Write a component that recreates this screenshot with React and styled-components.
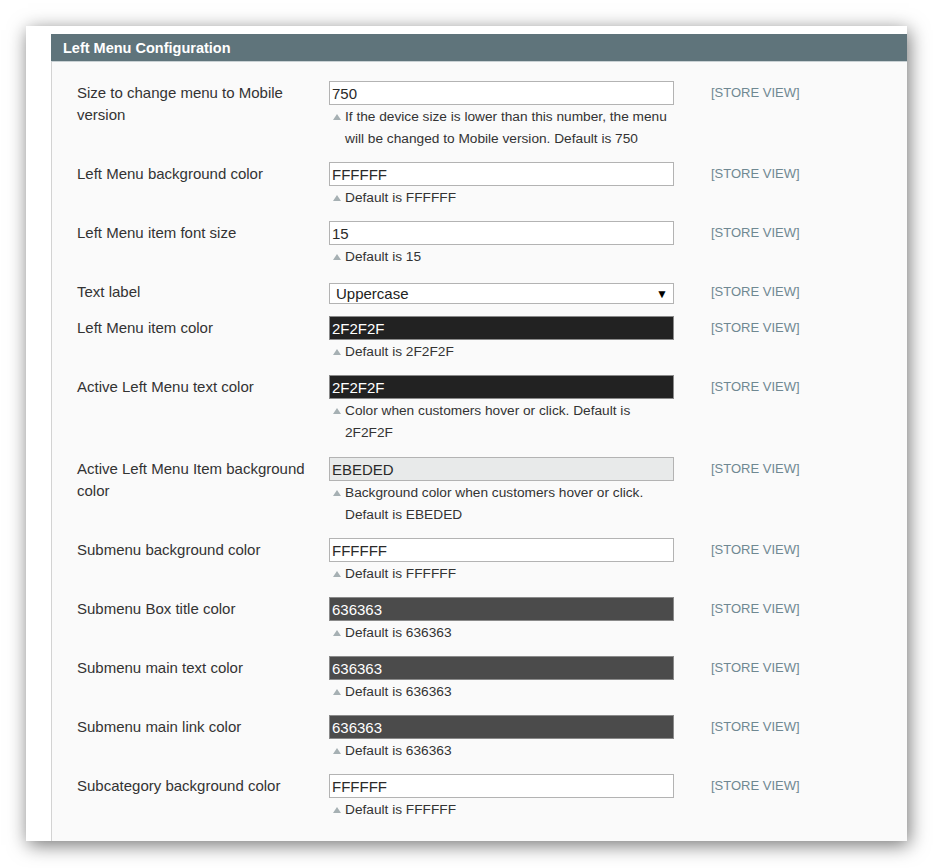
import React from "react";
import styled, { createGlobalStyle } from "styled-components";

const GlobalStyle = createGlobalStyle`
  html, body {
    margin: 0;
    padding: 0;
    background: #fff;
  }
  body {
    font-family: "Liberation Sans", Arial, sans-serif;
    color: #2f2f2f;
  }
`;

const Page = styled.div`
  padding: 26px 0 27px 26px;
`;

const Card = styled.div`
  width: 881px;
  height: 815px;
  box-sizing: border-box;
  padding: 8px 0 0 25px;
  background: #fff;
  box-shadow: 2px 4px 18px rgba(0, 0, 0, 0.55);
  display: flex;
  flex-direction: column;
`;

const Header = styled.div`
  height: 28px;
  box-sizing: border-box;
  background: #5f747b;
  border-bottom: 1px solid #c9d1d4;
  color: #fff;
  font-weight: bold;
  font-size: 14.5px;
  line-height: 29px;
  padding-left: 12px;
`;

const Body = styled.div`
  flex: 1;
  background: #fafafa;
  border-left: 1px solid #d3d3d3;
  padding: 19px 0 8px 25px;
`;

const Row = styled.div`
  display: grid;
  grid-template-columns: 252px 345px 1fr;
  padding-bottom: ${(p) => (p.$long ? 13 : 12)}px;
`;

const Label = styled.div`
  font-size: 15px;
  line-height: 22px;
  padding: 1px 12px 0 0;
  color: #333;
`;

const Field = styled.div`
  display: flex;
  flex-direction: column;
`;

const Input = styled.input`
  box-sizing: border-box;
  width: 345px;
  height: 24px;
  margin: 0;
  padding: 0 2px;
  border: 1px solid ${(p) => (p.$dark ? "#8a8a8a" : "#b3b3b3")};
  background: ${(p) => p.$bg || "#fff"};
  color: ${(p) => (p.$dark ? "#fff" : "#2a2a2a")};
  font-family: "Liberation Sans", Arial, sans-serif;
  font-size: 15px;
  outline: none;
`;

const SelectBox = styled.div`
  height: 24px;
  padding-top: 3px;
  box-sizing: border-box;
`;

const Select = styled.div`
  box-sizing: border-box;
  height: 21px;
  border: 1px solid #b3b3b3;
  background: #fff;
  display: flex;
  align-items: center;
  justify-content: space-between;
  padding: 0 5px 0 6px;
  font-size: 15px;
  color: #222;
`;

const Arrow = styled.span`
  font-size: 12px;
  color: #000;
`;

const Note = styled.div`
  position: relative;
  margin-top: 1px;
  padding-left: 16px;
  font-size: 13.7px;
  line-height: 22px;
  color: #333;

  &::before {
    content: "";
    position: absolute;
    left: 4px;
    top: 8px;
    border-left: 4px solid transparent;
    border-right: 4px solid transparent;
    border-bottom: 6px solid #a6b0b3;
  }
`;

const Scope = styled.div`
  padding-left: 37px;
  font-size: 13px;
  line-height: 24px;
  color: #6f8892;
`;

const rows = [
  {
    label: "Size to change menu to Mobile version",
    value: "750",
    note: "If the device size is lower than this number, the menu will be changed to Mobile version. Default is 750",
  },
  { label: "Left Menu background color", value: "FFFFFF", note: "Default is FFFFFF" },
  { label: "Left Menu item font size", value: "15", note: "Default is 15" },
  { label: "Text label", select: "Uppercase" },
  { label: "Left Menu item color", value: "2F2F2F", bg: "#222", dark: true, note: "Default is 2F2F2F" },
  {
    label: "Active Left Menu text color",
    value: "2F2F2F",
    bg: "#222",
    dark: true,
    long: true,
    note: "Color when customers hover or click. Default is 2F2F2F",
  },
  {
    label: "Active Left Menu Item background color",
    value: "EBEDED",
    bg: "#e8eaea",
    note: "Background color when customers hover or click. Default is EBEDED",
  },
  { label: "Submenu background color", value: "FFFFFF", note: "Default is FFFFFF" },
  { label: "Submenu Box title color", value: "636363", bg: "#4b4b4b", dark: true, note: "Default is 636363" },
  { label: "Submenu main text color", value: "636363", bg: "#4b4b4b", dark: true, note: "Default is 636363" },
  { label: "Submenu main link color", value: "636363", bg: "#4b4b4b", dark: true, note: "Default is 636363" },
  { label: "Subcategory background color", value: "FFFFFF", note: "Default is FFFFFF" },
];

export default function App() {
  return (
    <>
      <GlobalStyle />
      <Page>
        <Card>
          <Header>Left Menu Configuration</Header>
          <Body>
            {rows.map((r) => (
              <Row key={r.label} $long={r.long}>
                <Label>{r.label}</Label>
                <Field>
                  {r.select ? (
                    <SelectBox>
                      <Select>
                        <span>{r.select}</span>
                        <Arrow>▼</Arrow>
                      </Select>
                    </SelectBox>
                  ) : (
                    <Input defaultValue={r.value} $bg={r.bg} $dark={r.dark} />
                  )}
                  {r.note && <Note>{r.note}</Note>}
                </Field>
                <Scope>[STORE VIEW]</Scope>
              </Row>
            ))}
          </Body>
        </Card>
      </Page>
    </>
  );
}
